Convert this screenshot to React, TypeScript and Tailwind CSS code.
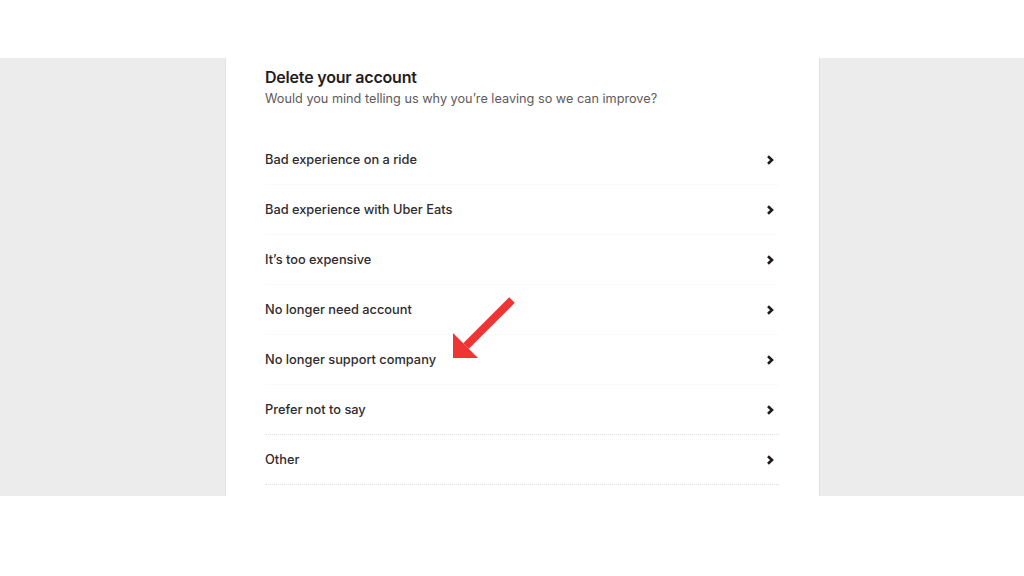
const reasons = [
  "Bad experience on a ride",
  "Bad experience with Uber Eats",
  "It’s too expensive",
  "No longer need account",
  "No longer support company",
  "Prefer not to say",
  "Other",
];

const Chevron = () => (
  <svg width="10" height="12" viewBox="0 0 10 12" className="text-[#1f1b1f]">
    <path d="M3 2.2 L7 6 L3 9.8" fill="none" stroke="currentColor" strokeWidth="2.6" strokeLinejoin="miter" />
  </svg>
);

const App = () => {
  return (
    <div className="relative h-[576px] w-[1024px] overflow-hidden bg-white font-['Inter',sans-serif]">
      <div className="mt-[58px] h-[438px] bg-[#ececec]">
        <div className="ml-[225px] h-full w-[595px] border-l border-r border-[#e2e2e2] bg-white pl-[39px] pr-10 pt-[9px]">
          <h1 className="text-[16px] font-semibold leading-5 tracking-[-0.2px] text-[#231d22]">Delete your account</h1>
          <p className="mt-[2px] text-[12.7px] leading-5 text-[#5e5a5c]">
            Would you mind telling us why you’re leaving so we can improve?
          </p>
          <ul className="mt-[26px]" role="list">
            {reasons.map((r, i) => (
              <li
                key={r}
                className={`flex h-[50px] items-center justify-between border-b pr-1 ${
                  i >= 5 ? "border-dotted border-[#e0e0e0]" : "border-[#fafafa]"
                }`}
              >
                <span className="text-[12.8px] font-medium text-[#2f2b2e]">{r}</span>
                <Chevron />
              </li>
            ))}
          </ul>
        </div>
      </div>
      <svg className="absolute left-[448px] top-[292px]" width="72" height="72" viewBox="0 0 72 72">
        <line x1="64" y1="8" x2="18" y2="54" stroke="#f03434" strokeWidth="8" />
        <polygon points="5,41 5,66 30,66" fill="#f03434" />
      </svg>
    </div>
  );
};

export default App;
